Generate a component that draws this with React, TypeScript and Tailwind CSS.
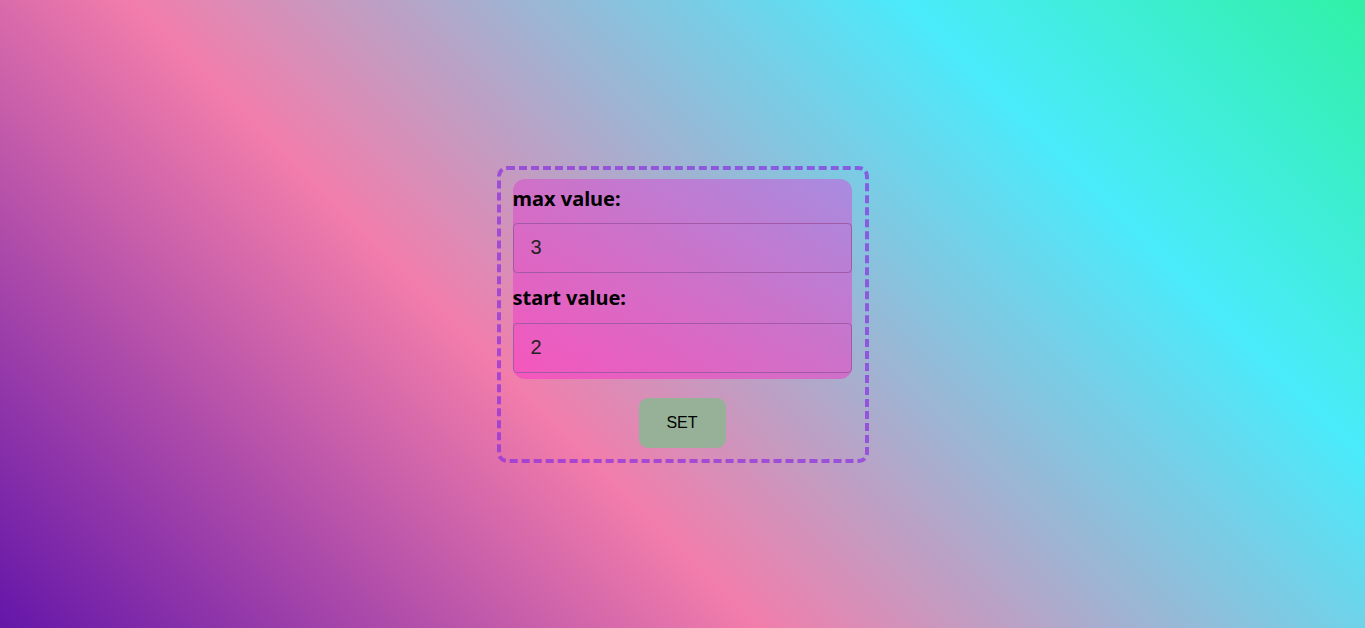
export default function App() {
  return (
    <div className="w-full h-[628px] flex items-center justify-center bg-[linear-gradient(45deg,#6416a9_0%,#f27dab_38%,#4aebfb_77%,#30f1a6_100%)]">
      <div className="w-[372px] h-[297px] border-4 border-dashed border-[rgba(138,43,226,0.68)] rounded-[10px] pl-3 pr-[13px] pt-[9px] flex flex-col items-center">
        <div className="w-full rounded-[12px] bg-[linear-gradient(to_top_right,#f656bc,#cf70c8_50%,#a78ce0)] flex flex-col pb-[6px]">
          <label className="h-[44px] pb-[4px] flex items-center text-[20px] font-bold text-black font-['Noto_Sans',sans-serif] leading-none">
            max value:
          </label>
          <input
            type="number"
            defaultValue={3}
            className="h-[50px] w-full rounded-[4px] border border-[#a25aa8] bg-transparent px-[17px] text-[20px] text-[#222] font-['Liberation_Sans',Arial,sans-serif] outline-none"
          />
          <label className="h-[50px] flex items-center text-[20px] font-bold text-black font-['Noto_Sans',sans-serif] leading-none">
            start value:
          </label>
          <input
            type="number"
            defaultValue={2}
            className="h-[50px] w-full rounded-[4px] border border-[#a25aa8] bg-transparent px-[17px] text-[20px] text-[#222] font-['Liberation_Sans',Arial,sans-serif] outline-none"
          />
        </div>
        <button className="mt-[19px] w-[87px] h-[50px] rounded-[9px] bg-[#96b197] text-[16px] text-black font-['Liberation_Sans',Arial,sans-serif]">
          SET
        </button>
      </div>
    </div>
  )
}
